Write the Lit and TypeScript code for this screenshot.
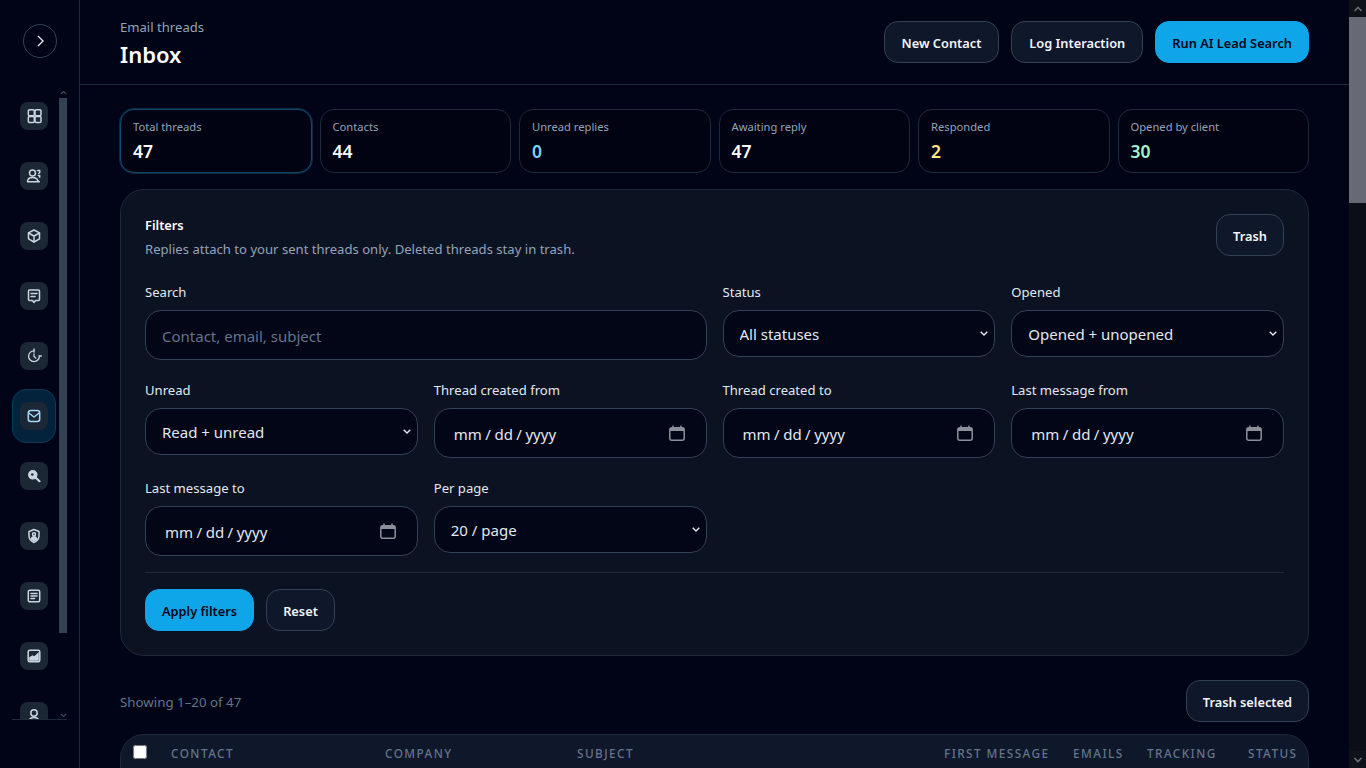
import { LitElement, css, html, svg } from 'lit'
import { customElement } from 'lit/decorators.js'

const navIcons = [
  svg`<rect x="2.300" y="1.800" width="6" height="6" rx="1.200"/><rect x="9" y="1.800" width="6" height="6" rx="1.200"/><rect x="2.300" y="8.500" width="6" height="6" rx="1.200"/><rect x="9" y="8.500" width="6" height="6" rx="1.200"/>`,
  svg`<circle cx="6.500" cy="5" r="3"/><path d="M1.500 13.800c0-3 2.200-4.400 5-4.400s4.800 1.400 5.300 3.200l1.500 1.200H1.500z"/><path d="M11.500 2.500h2.200v2.200l-1 .6M12.200 7.500h1.500v1.800"/>`,
  svg`<path d="M8 2l5.500 2.800v6L8 14l-5.500-3.200v-6z"/><path d="M2.500 5L8 8l5.500-3M8 8v6"/>`,
  svg`<path d="M3.500 2h9a1 1 0 0 1 1 1v8.500a1 1 0 0 1-1 1H9.500L8 14.500 6.500 12.500h-3a1 1 0 0 1-1-1V3a1 1 0 0 1 1-1z"/><path d="M5 5.500h6M5 8.500h4"/>`,
  svg`<path d="M8 2.800A5.400 5.400 0 1 0 13.400 8.200" stroke-width="1.300"/><path d="M8 1v3.200M8 6v2.500l1.800 1.600M13 8h2.400" stroke-width="1.300"/>`,
  svg`<rect x="2.300" y="2.500" width="11.400" height="11" rx="2.500"/><path d="M2.800 5L8 9l5.200-4"/>`,
  svg`<circle cx="6.800" cy="6.800" r="4" fill="currentColor"/><circle cx="6.300" cy="6.500" r="1.300" fill="#1c2736" stroke="none"/><path d="M10 10l3.500 3.200" stroke-width="2.200"/>`,
  svg`<path d="M8 1.500l5 2v4.300c0 3.200-2 5.500-5 6.700-3-1.200-5-3.500-5-6.700V3.500z"/><circle cx="8" cy="6.300" r="1.500"/><path d="M5.200 10.800c.6-1.300 1.600-2 2.800-2s2.200.7 2.800 2c-.8.9-1.700 1.500-2.800 2-1.100-.5-2-1.100-2.800-2z" fill="currentColor"/>`,
  svg`<rect x="2.300" y="2.200" width="11.400" height="11.600" rx="1.500"/><path d="M5 5.500h6M5 8h6M5 10.500h3.500"/>`,
  svg`<rect x="2.200" y="2.200" width="11.600" height="11.600" rx="1.500"/><path d="M3.200 12.800V9.200l3.300-2 1.800 1L12.800 4v8.800z" fill="currentColor" stroke="none"/>`,
  svg`<circle cx="8" cy="5" r="3.200"/><path d="M2.500 14c.5-3 2.600-4.500 5.500-4.500s5 1.500 5.500 4.500z"/>`,
]

const stats = [
  { label: 'Total threads', value: '47', tone: '', active: true },
  { label: 'Contacts', value: '44', tone: '' },
  { label: 'Unread replies', value: '0', tone: 'sky' },
  { label: 'Awaiting reply', value: '47', tone: '' },
  { label: 'Responded', value: '2', tone: 'amber' },
  { label: 'Opened by client', value: '30', tone: 'green' },
]

const columns = ['Contact', 'Company', 'Subject', 'First message', 'Emails', 'Tracking', 'Status']

@customElement('app-root')
export class AppRoot extends LitElement {
  static styles = css`
    :host {
      display: flex;
      height: 768px;
      overflow: hidden;
      background: #010416;
      color: #e2e8f0;
      font-family: 'Noto Sans', 'Open Sans', sans-serif;
      color-scheme: dark;
    }

    .sidebar {
      flex: 0 0 79px;
      border-right: 1px solid #1e293b;
      box-sizing: content-box;
    }
    .toggle-row {
      height: 82px;
      display: flex;
      align-items: center;
      justify-content: center;
    }
    .toggle {
      width: 34px;
      height: 34px;
      box-sizing: border-box;
      border: 1px solid #334155;
      border-radius: 50%;
      display: flex;
      align-items: center;
      justify-content: center;
      color: #e2e8f0;
    }
    .nav {
      margin-left: 12px;
      width: 55px;
      height: 638px;
      display: flex;
      overflow: hidden;
      border-bottom: 1px solid #1e293b;
      box-sizing: border-box;
    }
    .nav-list {
      width: 44px;
      padding-top: 7px;
      display: flex;
      flex-direction: column;
      gap: 6px;
      flex: none;
    }
    .nav-item {
      flex: none;
      height: 54px;
      box-sizing: border-box;
      border: 1px solid transparent;
      border-radius: 14px;
      display: flex;
      align-items: center;
      justify-content: center;
      color: #cbd5e1;
    }
    .nav-item.active {
      background: #03233c;
      border-color: #0a3a5a;
      color: #a5d8f3;
    }
    .tile {
      width: 28px;
      height: 28px;
      border-radius: 8px;
      background: #1c2736;
      display: flex;
      align-items: center;
      justify-content: center;
    }
    .nav-item svg {
      width: 16px;
      height: 16px;
      fill: none;
      stroke: currentColor;
      stroke-width: 1.5;
      stroke-linejoin: round;
      stroke-linecap: round;
    }
    .nav-scroll {
      margin-left: 3px;
      width: 8px;
      display: flex;
      flex-direction: column;
      align-items: stretch;
    }
    .nav-scroll .btn {
      height: 16px;
      padding-bottom: 2px;
      box-sizing: border-box;
      color: #475569;
      display: flex;
      align-items: flex-end;
      justify-content: center;
    }
    .nav-scroll .thumb {
      height: 535px;
      background: #334155;
    }
    .nav-scroll .rest {
      flex: 1;
      display: flex;
      align-items: flex-end;
      justify-content: center;
      color: #475569;
    }

    .main {
      flex: 1;
      min-width: 0;
      overflow: hidden;
    }
    .header {
      height: 84px;
      box-sizing: content-box;
      border-bottom: 1px solid #1e293b;
      padding: 0 40px;
      display: flex;
      align-items: center;
      justify-content: space-between;
    }
    .title-block {
      margin-top: 3px;
    }
    .eyebrow {
      font-size: 13.100px;
      line-height: 18px;
      color: #94a3b8;
    }
    h1 {
      margin: 2px 0 0;
      font-size: 22px;
      line-height: 32px;
      font-weight: 600;
      color: #fff;
    }
    .actions {
      display: flex;
      gap: 12px;
    }
    .btn-ui {
      height: 42px;
      box-sizing: border-box;
      padding: 1px 16px 0;
      border-radius: 14px;
      border: 1px solid #334155;
      background: #0f172a;
      color: #f1f5f9;
      font: 600 12.800px/20px 'Noto Sans', sans-serif;
      white-space: nowrap;
    }
    .btn-ui.primary {
      background: #0ea5e9;
      border-color: #0ea5e9;
      color: #020617;
    }
    .btn-ui.roomy {
      padding: 1px 17px 0;
    }

    .content {
      padding: 24px 40px;
    }
    .stats {
      display: grid;
      grid-template-columns: repeat(6, 1fr);
      gap: 8px;
    }
    .stat {
      height: 64px;
      box-sizing: border-box;
      padding: 9px 12px;
      border: 1px solid #1e293b;
      border-radius: 14px;
      background: #010313;
    }
    .stat.active {
      border-color: #0c4a6e;
      box-shadow: 0 0 0 1px #0a2a42;
    }
    .stat-label {
      font-size: 11.200px;
      line-height: 16px;
      color: #94a3b8;
    }
    .stat-value {
      margin-top: 4px;
      font-size: 17.500px;
      line-height: 24px;
      font-weight: 600;
      color: #fff;
    }
    .stat-value.sky {
      color: #7dd3fc;
    }
    .stat-value.amber {
      color: #fde68a;
    }
    .stat-value.green {
      color: #a7f3d0;
    }

    .panel {
      margin-top: 16px;
      padding: 24px;
      border: 1px solid #1e293b;
      border-radius: 24px;
      background: #0b1222;
    }
    .panel-head {
      display: flex;
      justify-content: space-between;
      align-items: flex-start;
      margin-bottom: 23px;
    }
    .panel-copy {
      padding-top: 1px;
    }
    .panel-title {
      font-size: 12.800px;
      line-height: 20px;
      font-weight: 600;
      color: #fff;
    }
    .panel-desc {
      margin-top: 4px;
      font-size: 13.100px;
      line-height: 20px;
      color: #94a3b8;
    }
    .grid {
      display: grid;
      grid-template-columns: repeat(4, 1fr);
      gap: 20px 16px;
      align-items: start;
    }
    .field {
      display: flex;
      flex-direction: column;
      min-width: 0;
    }
    .wide {
      grid-column: span 2;
    }
    label {
      font-size: 13.100px;
      line-height: 20px;
      margin-bottom: 8px;
      color: #e2e8f0;
    }
    input,
    select {
      box-sizing: border-box;
      width: 100%;
      border: 1px solid #334155;
      border-radius: 16px;
      background: #020617;
      color: #e2e8f0;
      font: 400 15px/24px 'Noto Sans', sans-serif;
      padding: 13px 16px 11px;
      outline: none;
    }
    input {
      height: 50px;
    }
    input[type='date'] {
      padding-left: 18px;
    }
    input::-webkit-datetime-edit-text {
      padding: 0 2.500px;
    }
    input::-webkit-calendar-picker-indicator {
      width: 16px;
      height: 16px;
      padding: 0;
      margin: -3px 5px 0 0;
      background: url("data:image/svg+xml,%3Csvg xmlns='http://www.w3.org/2000/svg' viewBox='0 0 16 16'%3E%3Cpath d='M4 .5v3M12 .5v3' stroke='%238a8f99' stroke-width='1.500'/%3E%3Crect x='.8' y='2.800' width='14.400' height='12.400' rx='2' fill='none' stroke='%238a8f99' stroke-width='1.500'/%3E%3Crect x='1' y='3' width='14' height='3' fill='%238a8f99'/%3E%3C/svg%3E")
        center / contain no-repeat;
    }
    select {
      appearance: none;
      height: 47px;
      padding: 11px 16px;
      background: #020617
        url("data:image/svg+xml,%3Csvg xmlns='http://www.w3.org/2000/svg' viewBox='0 0 8 5'%3E%3Cpath d='M.7.7L4 4l3.300-3.300' fill='none' stroke='%23e2e8f0' stroke-width='1.400'/%3E%3C/svg%3E")
        right 6px center / 8px 5px no-repeat;
    }
    input::placeholder {
      color: #64748b;
    }
    .form-actions {
      margin-top: 16px;
      padding-top: 16px;
      border-top: 1px solid #1e293b;
      display: flex;
      gap: 12px;
    }

    .toolbar {
      margin-top: 24px;
      display: flex;
      align-items: center;
      justify-content: space-between;
    }
    .showing {
      padding-top: 1px;
      font-size: 13.300px;
      color: #64748b;
    }
    .table {
      margin-top: 12px;
      height: 60px;
      border: 1px solid #1e293b;
      border-radius: 24px 24px 0 0;
      background: #0f172a;
      padding: 9px 0 0 12px;
      box-sizing: border-box;
      display: grid;
      grid-template-columns: 38px 214px 192px 367px 129px 74px 101px auto;
      font-size: 11.800px;
      line-height: 18px;
      letter-spacing: 0.12em;
      text-transform: uppercase;
      font-weight: 500;
      color: #64748b;
    }
    .table input {
      display: block;
      width: 14px;
      height: 14px;
      margin: 1px 0 0;
      accent-color: #fff;
      color-scheme: light;
      padding: 0;
    }

    .page-scroll {
      flex: 0 0 17px;
      display: flex;
      flex-direction: column;
      background: #0b0d17;
      color: #6b6e78;
    }
    .page-scroll .btn {
      height: 17px;
      background: #10121a;
      display: flex;
      align-items: center;
      justify-content: center;
    }
    .page-scroll .thumb {
      height: 186px;
      background: #676a74;
    }
    .page-scroll .rest {
      flex: 1;
    }
  `

  private chevron(up: boolean, size: number) {
    return html`<svg width=${size} height=${size} viewBox="0 0 10 10" fill="none" stroke="currentColor" stroke-width="1.600">
      <path d=${up ? 'M1.500 7L5 3.500 8.500 7' : 'M1.500 3L5 6.500 8.500 3'} />
    </svg>`
  }

  private dateField(name: string) {
    return html`<div class="field">
      <label>${name}</label>
      <input type="date" />
    </div>`
  }

  private selectField(name: string, options: string[]) {
    return html`<div class="field">
      <label>${name}</label>
      <select>
        ${options.map((o) => html`<option>${o}</option>`)}
      </select>
    </div>`
  }

  render() {
    return html`
      <aside class="sidebar">
        <div class="toggle-row">
          <div class="toggle">
            <svg width="14" height="14" viewBox="0 0 14 14" fill="none" stroke="currentColor" stroke-width="1.400">
              <path d="M5 2l5 5-5 5" />
            </svg>
          </div>
        </div>
        <nav class="nav">
          <div class="nav-list">
            ${navIcons.map(
              (icon, i) => html`<div class="nav-item ${i === 5 ? 'active' : ''}">
                <div class="tile"><svg viewBox="0 0 16 16">${icon}</svg></div>
              </div>`,
            )}
          </div>
          <div class="nav-scroll">
            <div class="btn">${this.chevron(true, 7)}</div>
            <div class="thumb"></div>
            <div class="rest">${this.chevron(false, 7)}</div>
          </div>
        </nav>
      </aside>

      <div class="main">
        <header class="header">
          <div class="title-block">
            <div class="eyebrow">Email threads</div>
            <h1>Inbox</h1>
          </div>
          <div class="actions">
            <button class="btn-ui roomy">New Contact</button>
            <button class="btn-ui roomy">Log Interaction</button>
            <button class="btn-ui primary">Run AI Lead Search</button>
          </div>
        </header>

        <div class="content">
          <section class="stats">
            ${stats.map(
              (s) => html`<div class="stat ${s.active ? 'active' : ''}">
                <div class="stat-label">${s.label}</div>
                <div class="stat-value ${s.tone}">${s.value}</div>
              </div>`,
            )}
          </section>

          <section class="panel">
            <div class="panel-head">
              <div class="panel-copy">
                <div class="panel-title">Filters</div>
                <div class="panel-desc">Replies attach to your sent threads only. Deleted threads stay in trash.</div>
              </div>
              <button class="btn-ui">Trash</button>
            </div>
            <div class="grid">
              <div class="field wide">
                <label>Search</label>
                <input type="text" placeholder="Contact, email, subject" />
              </div>
              ${this.selectField('Status', ['All statuses'])}
              ${this.selectField('Opened', ['Opened + unopened'])}
              ${this.selectField('Unread', ['Read + unread'])}
              ${this.dateField('Thread created from')}
              ${this.dateField('Thread created to')}
              ${this.dateField('Last message from')}
              ${this.dateField('Last message to')}
              ${this.selectField('Per page', ['20 / page'])}
            </div>
            <div class="form-actions">
              <button class="btn-ui primary">Apply filters</button>
              <button class="btn-ui">Reset</button>
            </div>
          </section>

          <div class="toolbar">
            <div class="showing">Showing 1–20 of 47</div>
            <button class="btn-ui">Trash selected</button>
          </div>

          <div class="table">
            <div><input type="checkbox" /></div>
            ${columns.map((c) => html`<div>${c}</div>`)}
          </div>
        </div>
      </div>

      <div class="page-scroll">
        <div class="btn">${this.chevron(true, 10)}</div>
        <div class="thumb"></div>
        <div class="rest"></div>
        <div class="btn">${this.chevron(false, 10)}</div>
      </div>
    `
  }
}
